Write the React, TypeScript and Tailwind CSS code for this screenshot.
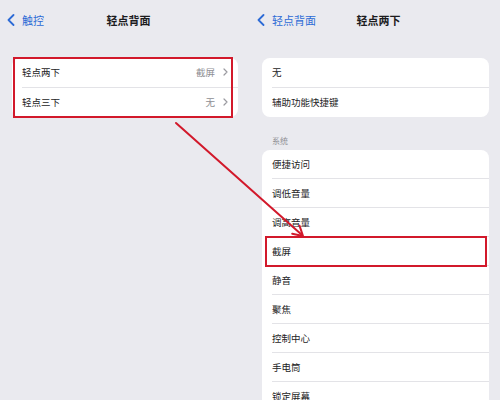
import React from 'react';

const FONT = { fontFamily: '"Noto Sans CJK SC", "Noto Sans", sans-serif' };

function BackChevron() {
  return (
    <svg width="8" height="12" viewBox="0 0 8 12" className="shrink-0">
      <path d="M6.5 1 L1.5 6 L6.5 11" fill="none" stroke="#2d6bd6" strokeWidth="1.8" strokeLinecap="round" strokeLinejoin="round" />
    </svg>
  );
}

function RowChevron() {
  return (
    <svg width="5" height="8" viewBox="0 0 5 8" className="shrink-0">
      <path d="M1 1 L4 4 L1 7" fill="none" stroke="#9a9aa0" strokeWidth="1.2" strokeLinecap="round" strokeLinejoin="round" />
    </svg>
  );
}

function NavBar({ back, title }: { back: string; title: string }) {
  return (
    <div className="h-[40px] grid grid-cols-[1fr_auto_1fr] items-center pl-[7px]">
      <div className="flex items-center gap-[7px]">
        <BackChevron />
        <span className="text-[11px] text-[#2d6bd6]">{back}</span>
      </div>
      <span className="text-[11px] font-semibold text-[#1c1c1e]">{title}</span>
      <div />
    </div>
  );
}

type Row = { label: string; value?: string; chevron?: boolean };

function Card({ rows, rowH }: { rows: Row[]; rowH: string }) {
  return (
    <div className="bg-white rounded-[8px] overflow-hidden">
      {rows.map((r, i) => (
        <div key={r.label} className="pl-[10px]">
          <div
            className={`${rowH} flex items-center pr-[10px] ${i < rows.length - 1 ? 'border-b border-[#e3e3e7]' : ''}`}
          >
            <span className="flex-1 text-[9.5px] text-[#232325]">{r.label}</span>
            {r.value && <span className="text-[9.5px] text-[#8e8e93] mr-[8px]">{r.value}</span>}
            {r.chevron && <RowChevron />}
          </div>
        </div>
      ))}
    </div>
  );
}

const SYSTEM = ['便捷访问', '调低音量', '调高音量', '截屏', '静音', '聚焦', '控制中心', '手电筒', '锁定屏幕', '摇动'];

export default function App() {
  return (
    <div className="relative w-[500px] h-[400px] overflow-hidden bg-[#eaeaef] flex" style={FONT}>
      <div className="w-[250px] shrink-0">
        <NavBar back="触控" title="轻点背面" />
        <div className="mt-[18px] pl-[12px] pr-[12px]">
          <Card
            rowH="h-[29.5px]"
            rows={[
              { label: '轻点两下', value: '截屏', chevron: true },
              { label: '轻点三下', value: '无', chevron: true },
            ]}
          />
        </div>
      </div>

      <div className="w-[250px] shrink-0">
        <NavBar back="轻点背面" title="轻点两下" />
        <div className="mt-[18px] pl-[12px] pr-[11px]">
          <Card rowH="h-[29.5px]" rows={[{ label: '无' }, { label: '辅助功能快捷键' }]} />
          <div className="mt-[19px] mb-[4px] pl-[10px] text-[8px] text-[#8e8e93] leading-[10px]">系统</div>
          <Card rowH="h-[29px]" rows={SYSTEM.map((label) => ({ label }))} />
        </div>
      </div>

      {/* highlight boxes and arrow */}
      <div className="absolute left-[13px] top-[57px] w-[220px] h-[61px] border-[2.5px] border-[#d2192b] pointer-events-none" />
      <div className="absolute left-[265px] top-[236px] w-[222px] h-[31px] border-[2.5px] border-[#d2192b] pointer-events-none" />
      <svg className="absolute inset-0 pointer-events-none" width="500" height="400">
        <line x1="176" y1="123" x2="302" y2="235" stroke="#d2192b" strokeWidth="2" strokeLinecap="round" />
        <path d="M299.5 225.6 L303 236 L292.2 233.8" fill="none" stroke="#d2192b" strokeWidth="2" strokeLinecap="round" strokeLinejoin="round" />
      </svg>
    </div>
  );
}
